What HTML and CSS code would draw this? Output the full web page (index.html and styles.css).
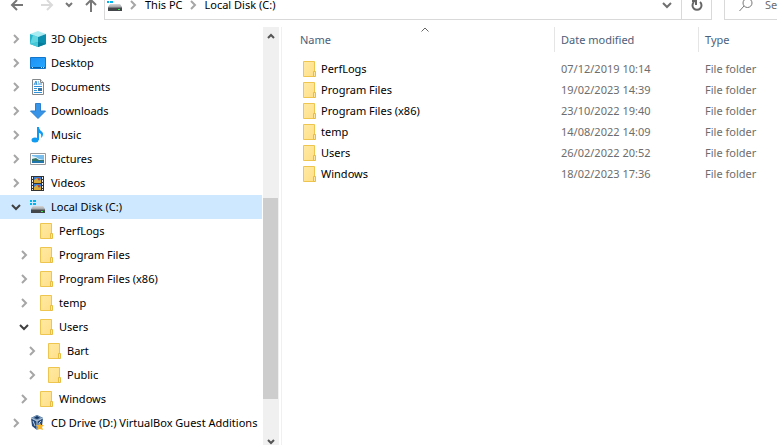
FILE: index.html
```html
<!DOCTYPE html>
<html lang="en">
<head>
<meta charset="utf-8">
<title>Local Disk (C:)</title>
<link rel="stylesheet" href="styles.css">
</head>
<body>
<svg class="defs" aria-hidden="true">
  <defs>
    <linearGradient id="paper" x1="0" y1="0" x2="1" y2="1"><stop offset="0" stop-color="#ffe9a2"/><stop offset="1" stop-color="#ffe08a"/></linearGradient>
    <linearGradient id="screen" x1="0" y1="0" x2="1" y2="1"><stop offset="0" stop-color="#1e90f5"/><stop offset="1" stop-color="#27a9ff"/></linearGradient>
    <linearGradient id="metal" x1="0" y1="0" x2="0" y2="1"><stop offset="0" stop-color="#d5d7d8"/><stop offset="1" stop-color="#a2a5a8"/></linearGradient>
    <symbol id="right" viewBox="0 0 10 10"><path d="M3 1l4 4-4 4" fill="none" stroke="#a6a6a6" stroke-width="2"/></symbol>
    <symbol id="down" viewBox="0 0 10 10"><path d="M1 3l4 4 4-4" fill="none" stroke="#404040" stroke-width="2"/></symbol>
    <symbol id="folder" viewBox="0 0 16 16">
      <path d="M2.500.5h11v15h-11z" fill="url(#paper)" stroke="#edc54f"/>
      <path d="M12.500 15.500v-5h2v5z" fill="#ffe9a2" stroke="#e8bd43"/>
    </symbol>
    <symbol id="disk" viewBox="0 0 16 16">
      <path d="M0 1h2v2H0zM3 1h3v2H3zM0 4h2v2H0zM3 4h3v2H3z" fill="#00b4ee"/>
      <path d="M3 7h10l2 3H1z" fill="url(#metal)"/>
      <path d="M1 10h14v4H1z" fill="#43474a"/>
      <path d="M1 10h14v1H1z" fill="#777b7e"/>
      <path d="M11 12h2v1h-2z" fill="#32ee45"/>
    </symbol>
    <symbol id="cube" viewBox="0 0 16 16">
      <path d="M0 3l8-3 8 3-8 3z" fill="#a9edf2"/>
      <path d="M0 3l8 3v10l-8-3z" fill="#25b4ca"/>
      <path d="M16 3L8 6v10l8-3z" fill="#0b8fae"/>
      <path d="M3 4l5 2v5L0 13z" fill="#63d5e0"/>
      <path d="M8 11l8 2-8 3z" fill="#087c9b"/>
      <path d="M8 11l-8 2 8 3z" fill="#48c7d6"/>
    </symbol>
    <symbol id="desktop" viewBox="0 0 16 16">
      <path d="M.5 2.500h15v11H.5z" fill="url(#screen)" stroke="#1276cb"/>
      <path d="M1 12h14v1H1z" fill="#075ca7"/><path d="M2 12h1v1H2zM11 12h1v1h-1zM13 12h1v1h-1z" fill="#bee5ff"/>
    </symbol>
    <symbol id="document" viewBox="0 0 16 16">
      <path d="M2.500.5h8l3 3v12h-11z" fill="#fff" stroke="#84888b"/><path d="M10.500.5v3h3" fill="#e8e8e8" stroke="#84888b"/>
      <path d="M4 6l2-4 1 4M5 5h2M8 3h1M8 5h4M4 7.500h8M4 9.500h3M4 11.500h3M4 13.500h8" fill="none" stroke="#3092d8"/>
      <path d="M8 9h4v3H8z" fill="#3974a7"/>
    </symbol>
    <symbol id="download" viewBox="0 0 16 16"><path d="M5.500.5h5V8h5L8 15.500.5 8h5z" fill="#3794e7" stroke="#2d80cf"/></symbol>
    <symbol id="music" viewBox="0 0 16 16"><ellipse cx="5" cy="13" rx="3.500" ry="2.500" fill="#109af0"/><path d="M7 0h2c0 4 4 4 4 7 0 2-1 3-2 4 1-4-1-5-2-5v7H7z" fill="#109af0"/></symbol>
    <symbol id="picture" viewBox="0 0 16 16">
      <path d="M.5 2.500h15v11H.5z" fill="#fff" stroke="#969a9d"/><path d="M2 4h12v8H2z" fill="#78bdec"/>
      <path d="M2 5l4 1 3 2 5 1H2z" fill="#e7f5fa"/><path d="M2 8l4-1 3 2h5v1H2z" fill="#377565"/><path d="M2 10h12v2H2z" fill="#2177ad"/>
    </symbol>
    <symbol id="video" viewBox="0 0 16 16">
      <path d="M1 1h13v15H1z" fill="#333"/><path d="M4 2h7v6H4zM4 9h7v6H4z" fill="#397fd9"/>
      <path d="M4 5l3-2 2 3 2-2v4H4zM4 12l3-2 2 3 2-2v4H4z" fill="#d9aa35"/><path d="M8 3h2v2H8zM8 10h2v2H8z" fill="#b94739"/>
      <path d="M2.500 2v13M12.500 2v13" stroke="#eee" stroke-dasharray="2 1"/>
    </symbol>
    <symbol id="vbox" viewBox="0 0 16 16">
      <path d="M1 3l6-3 6 3-1 8-5 4-5-4z" fill="#24497a"/><path d="M1 3l6-3 6 3-6 3z" fill="#7596b9"/>
      <path d="M4 3l3-2 3 2-3 1z" fill="#163763"/><path d="M1 3l6 3v9M13 3L7 6M3 6l2 5M11 6l-2 2v3" fill="none" stroke="#bed0e0"/>
      <path d="M10 8l1 2h3l-2 2 1 3-3-1-3 1 1-3-2-2h3z" fill="#f8b52a"/>
    </symbol>
  </defs>
</svg>

<header class="toolbar">
  <nav class="history" aria-label="History">
    <button aria-label="Back"><svg class="arrow" viewBox="0 0 14 14"><path d="M7 2L2 7l5 5M2 7h11" fill="none" stroke="#777" stroke-width="2"/></svg></button>
    <button aria-label="Forward" disabled><svg class="arrow" viewBox="0 0 14 14"><path d="M7 2l5 5-5 5M12 7H1" fill="none" stroke="#dadada" stroke-width="2"/></svg></button>
    <button class="recent" aria-label="Recent locations"><svg class="small" viewBox="0 0 8 8"><path d="M1 2l3 3 3-3" fill="none" stroke="#777" stroke-width="2"/></svg></button>
    <button aria-label="Up"><svg class="arrow" viewBox="0 0 14 14"><path d="M2 7l5-5 5 5M7 2v12" fill="none" stroke="#777" stroke-width="2"/></svg></button>
  </nav>
  <div class="address">
    <svg class="icon"><use href="#disk"/></svg>
    <svg class="crumb"><use href="#right"/></svg>
    <a href="#pc">This PC</a>
    <svg class="crumb"><use href="#right"/></svg>
    <a href="#c">Local Disk (C:)</a>
    <button class="previous" aria-label="Previous locations"><svg class="chevron" viewBox="0 0 10 10"><path d="M1 3l4 4 4-4" fill="none" stroke="#707070" stroke-width="2"/></svg></button>
    <button class="refresh" aria-label="Refresh"><svg class="arrow" viewBox="0 0 14 14"><path d="M4 4a4.500 4.500 0 1 0 6 0M2 3h4v4" fill="none" stroke="#666" stroke-width="2"/></svg></button>
  </div>
  <div class="search">
    <svg class="lens" viewBox="0 0 14 14"><circle cx="8.500" cy="5" r="4.500" fill="none" stroke="#777"/><path d="M5 8l-4.500 5" stroke="#777"/></svg>
    <input type="text" aria-label="Search" placeholder="Search">
  </div>
</header>

<div class="content">
  <aside class="sidebar">
    <ul class="tree">
      <li><a href="#o"><svg class="chevron"><use href="#right"/></svg><svg class="icon"><use href="#cube"/></svg>3D Objects</a></li>
      <li><a href="#d"><svg class="chevron"><use href="#right"/></svg><svg class="icon"><use href="#desktop"/></svg>Desktop</a></li>
      <li><a href="#t"><svg class="chevron"><use href="#right"/></svg><svg class="icon"><use href="#document"/></svg>Documents</a></li>
      <li><a href="#l"><svg class="chevron"><use href="#right"/></svg><svg class="icon"><use href="#download"/></svg>Downloads</a></li>
      <li><a href="#m"><svg class="chevron"><use href="#right"/></svg><svg class="icon"><use href="#music"/></svg>Music</a></li>
      <li><a href="#p"><svg class="chevron"><use href="#right"/></svg><svg class="icon"><use href="#picture"/></svg>Pictures</a></li>
      <li><a href="#v"><svg class="chevron"><use href="#right"/></svg><svg class="icon"><use href="#video"/></svg>Videos</a></li>
      <li>
        <a class="selected" href="#c"><svg class="chevron"><use href="#down"/></svg><svg class="icon"><use href="#disk"/></svg>Local Disk (C:)</a>
        <ul>
          <li><a href="#perf"><svg class="chevron"></svg><svg class="icon"><use href="#folder"/></svg>PerfLogs</a></li>
          <li><a href="#prog"><svg class="chevron"><use href="#right"/></svg><svg class="icon"><use href="#folder"/></svg>Program Files</a></li>
          <li><a href="#x86"><svg class="chevron"><use href="#right"/></svg><svg class="icon"><use href="#folder"/></svg>Program Files (x86)</a></li>
          <li><a href="#temp"><svg class="chevron"><use href="#right"/></svg><svg class="icon"><use href="#folder"/></svg>temp</a></li>
          <li>
            <a href="#users"><svg class="chevron"><use href="#down"/></svg><svg class="icon"><use href="#folder"/></svg>Users</a>
            <ul>
              <li><a href="#bart"><svg class="chevron"><use href="#right"/></svg><svg class="icon"><use href="#folder"/></svg>Bart</a></li>
              <li><a href="#public"><svg class="chevron"><use href="#right"/></svg><svg class="icon"><use href="#folder"/></svg>Public</a></li>
            </ul>
          </li>
          <li><a href="#win"><svg class="chevron"><use href="#right"/></svg><svg class="icon"><use href="#folder"/></svg>Windows</a></li>
        </ul>
      </li>
      <li><a href="#cd"><svg class="chevron"><use href="#right"/></svg><svg class="icon"><use href="#vbox"/></svg>CD Drive (D:) VirtualBox Guest Additions</a></li>
    </ul>
    <div class="scrollbar">
      <button aria-label="Scroll up"><svg class="small" viewBox="0 0 8 8"><path d="M1 6l3-3 3 3" fill="none" stroke="#555" stroke-width="2"/></svg></button>
      <div class="track"><div class="before"></div><div class="thumb"></div><div class="after"></div></div>
      <button class="end" aria-label="Scroll down"><svg class="small" viewBox="0 0 8 8"><path d="M1 3l3 3 3-3" fill="none" stroke="#555" stroke-width="2"/></svg></button>
    </div>
  </aside>
  <main>
    <table>
      <colgroup><col class="name-col"><col class="date-col"><col></colgroup>
      <thead><tr>
        <th aria-sort="ascending">Name<svg class="sort" viewBox="0 0 8 5"><path d="M.5 4.500L4 1l3.500 3.500" fill="none" stroke="#666"/></svg></th>
        <th>Date modified</th><th>Type</th>
      </tr></thead>
      <tbody>
        <tr><td><a href="#perf"><svg class="icon"><use href="#folder"/></svg>PerfLogs</a></td><td>07/12/2019 10:14</td><td>File folder</td></tr>
        <tr><td><a href="#prog"><svg class="icon"><use href="#folder"/></svg>Program Files</a></td><td>19/02/2023 14:39</td><td>File folder</td></tr>
        <tr><td><a href="#x86"><svg class="icon"><use href="#folder"/></svg>Program Files (x86)</a></td><td>23/10/2022 19:40</td><td>File folder</td></tr>
        <tr><td><a href="#temp"><svg class="icon"><use href="#folder"/></svg>temp</a></td><td>14/08/2022 14:09</td><td>File folder</td></tr>
        <tr><td><a href="#users"><svg class="icon"><use href="#folder"/></svg>Users</a></td><td>26/02/2022 20:52</td><td>File folder</td></tr>
        <tr><td><a href="#win"><svg class="icon"><use href="#folder"/></svg>Windows</a></td><td>18/02/2023 17:36</td><td>File folder</td></tr>
      </tbody>
    </table>
  </main>
</div>
</body>
</html>
```
FILE: styles.css
```css
* { box-sizing: border-box; }
html, body { height: 100%; }
body {
  display: flex;
  flex-direction: column;
  margin: 0;
  overflow: hidden;
  background: #fff;
  color: #000;
  font: 11px/16px "Noto Sans", sans-serif;
}
a { color: inherit; text-decoration: none; white-space: nowrap; }
button { display: flex; align-items: center; justify-content: center; padding: 0; border: 0; background: none; }
svg { flex: none; display: block; }
.defs { position: absolute; width: 0; height: 0; }
.icon { width: 16px; height: 16px; }
.chevron, .crumb { width: 10px; height: 10px; }
.arrow, .lens { width: 14px; height: 14px; }
.small { width: 8px; height: 8px; }

/* Toolbar */
.toolbar { display: flex; flex: none; height: 20px; }
.history { display: flex; align-items: center; gap: 16px; height: 10px; padding-left: 10px; }
.recent { margin: 0 -5px; }
.address {
  display: flex;
  flex: 1;
  align-items: center;
  margin-left: 6px;
  padding: 0 0 9px 2px;
  border: 1px solid #d9d9d9;
  border-top: 0;
}
.crumb { margin: 0 7px 0 5px; }
.previous { width: 28px; margin-left: auto; }
.refresh { width: 30px; height: 28px; flex: none; border-left: 1px solid #d9d9d9; }
.search {
  display: flex;
  flex: none;
  align-items: center;
  width: 53px;
  margin-left: 12px;
  padding: 0 0 9px 14px;
  border: solid #d9d9d9;
  border-width: 0 0 1px 1px;
}
.search input { flex: 1; min-width: 0; margin-left: 12px; padding: 0; border: 0; background: none; font: inherit; }
.search input::placeholder { color: #6d6d6d; opacity: 1; }

/* Panes */
.content { display: flex; flex: 1; min-height: 0; padding-top: 7px; }
.sidebar { display: flex; flex: none; width: 282px; padding-right: 2px; border-right: 1px solid #f0f0f0; }
.tree { flex: 1; min-width: 0; overflow: hidden; margin-right: 1px; }
ul { margin: 0; padding: 0; list-style: none; }
.tree a { display: flex; align-items: center; height: 24px; padding-left: 11px; }
.tree ul a { padding-left: 19px; }
.tree ul ul a { padding-left: 27px; }
.tree .icon { margin: 0 5px 0 9px; }
.tree .selected { background: #cde8ff; }

.scrollbar { display: flex; flex-direction: column; width: 16px; background: #f0f0f0; }
.scrollbar button { flex: none; height: 17px; }
.scrollbar .end { align-items: flex-end; }
.track { display: flex; flex: 1; flex-direction: column; }
.before { flex: 154; }
.thumb { flex: 201; width: 15px; background: #cdcdcd; }
.after { flex: 29; }

/* File list */
main { flex: 1; min-width: 0; }
table { width: 100%; table-layout: fixed; border-collapse: separate; border-spacing: 0; }
.name-col { width: 273px; }
.date-col { width: 144px; }
th, td { text-align: left; font-weight: 400; white-space: nowrap; }
th { position: relative; height: 25px; padding: 0 0 0 6px; color: #4c607a; border-right: 1px solid #e5e5e5; }
th:first-child { padding-left: 18px; }
td:first-child { padding-left: 19px; }
th:last-child { border-right: 0; }
.sort { position: absolute; top: 0; left: 51%; width: 8px; height: 5px; }
tbody::before { content: ""; display: block; height: 6px; }
td { height: 21px; padding: 0 0 0 6px; color: #6d6d6d; }
td a { display: flex; align-items: center; gap: 4px; color: #000; }
```
